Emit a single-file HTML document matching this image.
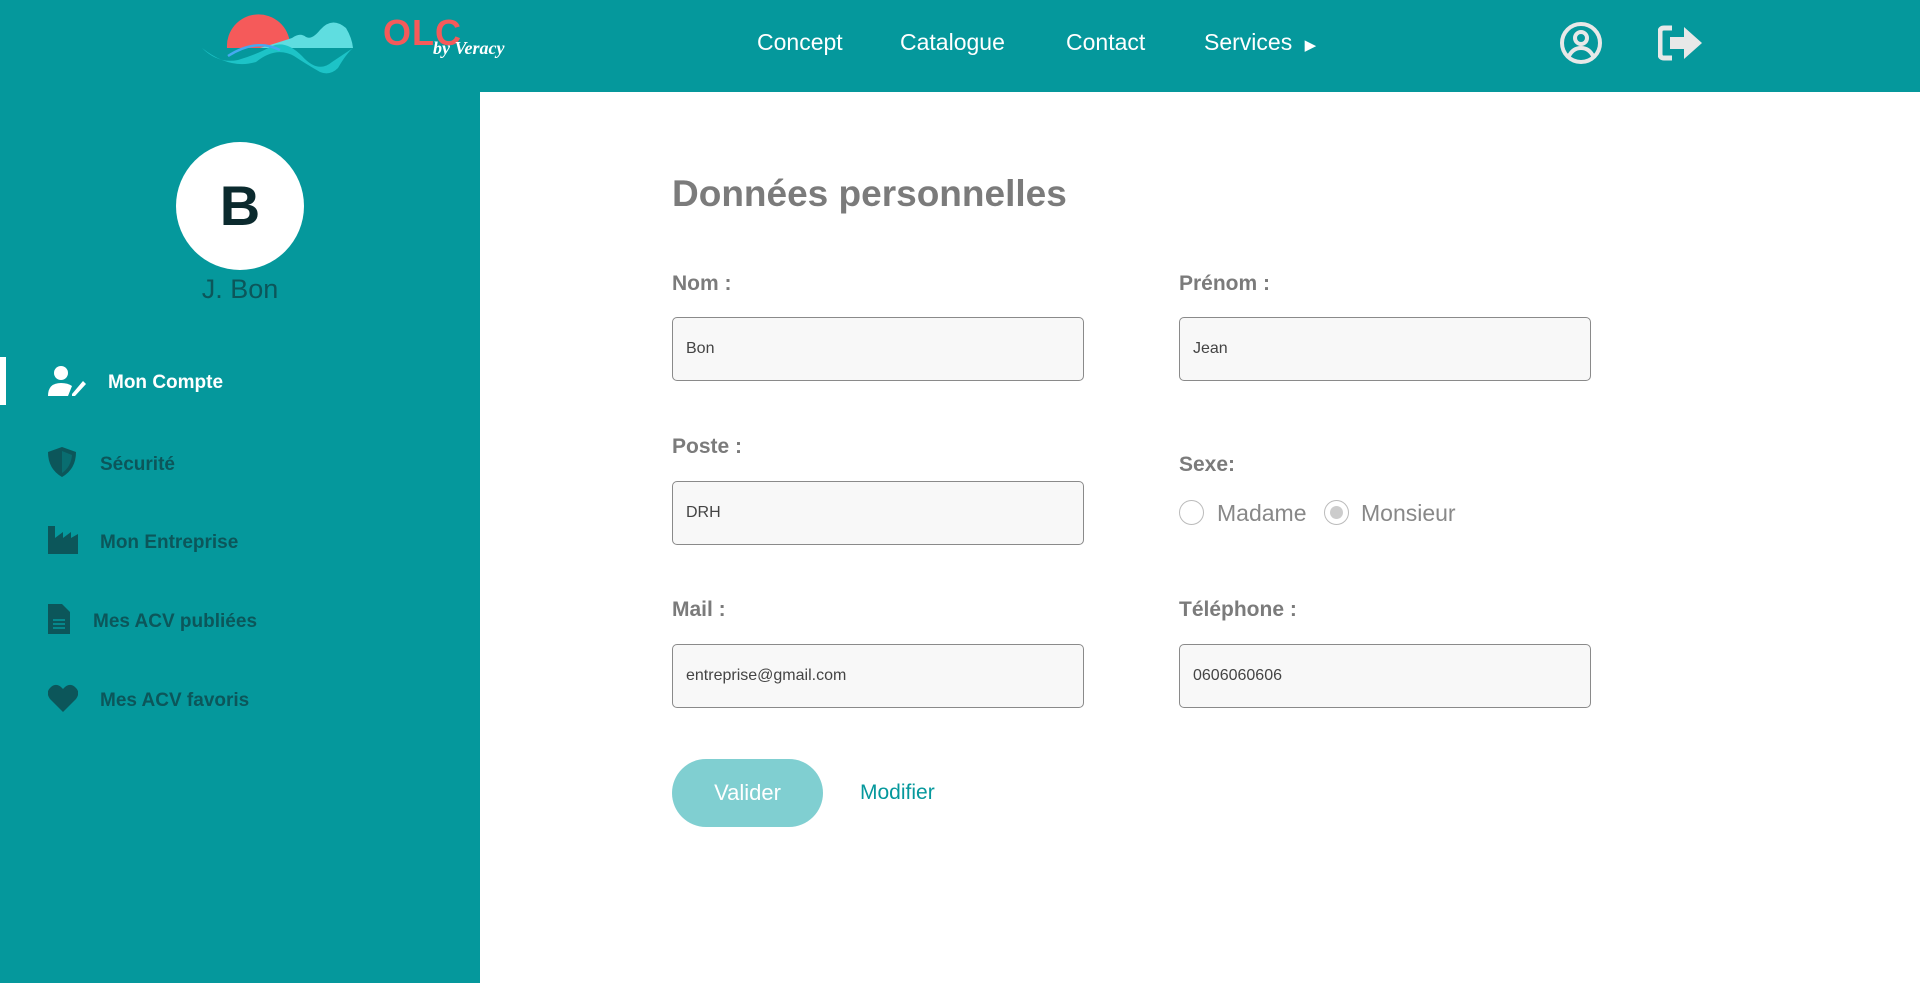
<!DOCTYPE html>
<html><head><meta charset="utf-8"><style>
*{margin:0;padding:0;box-sizing:border-box}
body{width:1920px;height:983px;overflow:hidden;font-family:"Liberation Sans",Arial,sans-serif;background:#fff;position:relative}
.hdr{position:absolute;left:0;top:0;width:1920px;height:92px;background:#05989c}
.side{position:absolute;left:0;top:92px;width:480px;height:891px;background:#05989c}
.nav{position:absolute;top:29px;color:#fff;font-size:23px}
.abs{position:absolute}
.mi{position:absolute;font-weight:bold;font-size:19px;color:#0c565a}
.lbl{position:absolute;font-weight:bold;font-size:21px;color:#7b7b7b}
.inp{position:absolute;width:412px;height:64px;border:1px solid #8a8a8a;border-radius:5px;background:#f8f8f8;font-size:16px;color:#444;padding:22px 0 0 13px}
</style></head><body>
<div class="hdr">
<svg class="abs" style="left:200px;top:4px" width="160" height="72" viewBox="0 0 160 72">
<path d="M27 44 A31 31 0 1 1 90 40 L90 44Z" fill="#f55a5a"/>
<path d="M60 44 Q80 38 92 34 Q100 28 106 33 Q112 36 120 26 Q132 12 146 24 Q152 34 153 44Z" fill="#5fdde0"/>
<path d="M2 44 Q18 60 38 56 Q58 50 72 42 Q86 36 102 52 Q118 70 132 58 L153 44 Q146 50 138 64 Q130 72 120 68 Q106 60 94 52 Q76 42 56 58 Q30 66 2 44Z" fill="#1dc3c7"/>
<path d="M28 52 Q56 34 80 46" stroke="#46a9f0" stroke-width="2.5" fill="none"/>
</svg>
<div class="abs" style="left:383px;top:12px;color:#f55a5a;font-weight:900;font-size:36px;letter-spacing:1px">OLC</div>
<div class="abs" style="left:433px;top:38px;color:#fff;font-style:italic;font-weight:bold;font-size:18px;font-family:'Liberation Serif',serif">by Veracy</div>
<div class="nav" style="left:757px">Concept</div>
<div class="nav" style="left:900px">Catalogue</div>
<div class="nav" style="left:1066px">Contact</div>
<div class="nav" style="left:1204px">Services <span style="font-size:15px;margin-left:6px">&#9654;</span></div>
<svg class="abs" style="left:1559px;top:21px" width="44" height="44" viewBox="0 0 44 44" fill="none" stroke="#e8e8e8" stroke-width="4"><circle cx="22" cy="22" r="19"/><circle cx="22" cy="17" r="6"/><path d="M10 35 Q14 27 22 27 Q30 27 34 35"/></svg>
<svg class="abs" style="left:1658px;top:24px" width="46" height="38" viewBox="0 0 46 38"><path d="M14 4 H6 Q2 4 2 8 V30 Q2 34 6 34 H14" stroke="#e8e8e8" stroke-width="5" fill="none"/><path d="M12 13 H26 V3 L44 19 L26 35 V25 H12Z" fill="#e8e8e8"/></svg>
</div>
<div class="side">
<div class="abs" style="left:176px;top:50px;width:128px;height:128px;border-radius:50%;background:#fff;text-align:center;line-height:128px;font-size:56px;font-weight:bold;color:#0b2a2e">B</div>
<div class="abs" style="left:0;width:480px;top:182px;text-align:center;font-size:27px;color:#0c565a">J. Bon</div>
<div class="abs" style="left:0;top:265px;width:6px;height:48px;background:#fff"></div>
<svg class="abs" style="left:48px;top:274px" width="38" height="30" viewBox="0 0 38 30" fill="#fff"><circle cx="13" cy="7" r="7"/><path d="M0 30 Q0 17 13 17 Q20 17 24 20 L20 30Z"/><path d="M24 28 L35 15 L38 18 L27 30 H24Z"/></svg>
<div class="mi" style="left:108px;top:280px;color:#fff">Mon Compte</div>
<svg class="abs" style="left:48px;top:355px" width="28" height="30" viewBox="0 0 28 30" fill="#0c565a"><path d="M14 0 L28 5 Q28 22 14 30 Q0 22 0 5Z"/><path d="M14 4 L24 8 Q23 20 14 26Z" fill="#05989c" opacity=".35"/></svg>
<div class="mi" style="left:100px;top:362px">Sécurité</div>
<svg class="abs" style="left:48px;top:434px" width="30" height="28" viewBox="0 0 30 28" fill="#0c565a"><path d="M0 0 H7 V12 L15 6 V12 L23 6 V12 L30 8 V28 H0Z"/></svg>
<div class="mi" style="left:100px;top:440px">Mon Entreprise</div>
<svg class="abs" style="left:48px;top:512px" width="22" height="30" viewBox="0 0 22 30" fill="#0c565a"><path d="M0 0 H14 L22 8 V30 H0Z"/><path d="M5 16 H17 M5 20 H17 M5 24 H17" stroke="#05989c" stroke-width="1.6"/></svg>
<div class="mi" style="left:93px;top:519px">Mes ACV publiées</div>
<svg class="abs" style="left:48px;top:592px" width="30" height="28" viewBox="0 0 30 28" fill="#0c565a"><path d="M15 28 L2 15 Q-3 8 3 3 Q9 -2 15 5 Q21 -2 27 3 Q33 8 28 15Z"/></svg>
<div class="mi" style="left:100px;top:598px">Mes ACV favoris</div>
</div>
<div class="abs" style="left:672px;top:173px;font-size:37px;font-weight:bold;color:#7b7b7b">Données personnelles</div>
<div class="lbl" style="left:672px;top:272px">Nom :</div>
<div class="lbl" style="left:1179px;top:272px">Prénom :</div>
<div class="inp" style="left:672px;top:317px">Bon</div>
<div class="inp" style="left:1179px;top:317px">Jean</div>
<div class="lbl" style="left:672px;top:435px">Poste :</div>
<div class="inp" style="left:672px;top:481px">DRH</div>
<div class="lbl" style="left:1179px;top:453px">Sexe:</div>
<div class="abs" style="left:1179px;top:500px;width:25px;height:25px;border:1px solid #bbb;border-radius:50%;background:#fff"></div>
<div class="abs" style="left:1217px;top:500px;font-size:23px;color:#888">Madame</div>
<div class="abs" style="left:1324px;top:500px;width:25px;height:25px;border:1px solid #bbb;border-radius:50%;background:#fff"><div style="margin:5px;width:13px;height:13px;border-radius:50%;background:#ccc"></div></div>
<div class="abs" style="left:1361px;top:500px;font-size:23px;color:#888">Monsieur</div>
<div class="lbl" style="left:672px;top:598px">Mail :</div>
<div class="lbl" style="left:1179px;top:598px">Téléphone :</div>
<div class="inp" style="left:672px;top:644px">entreprise@gmail.com</div>
<div class="inp" style="left:1179px;top:644px">0606060606</div>
<div class="abs" style="left:672px;top:759px;width:151px;height:68px;border-radius:34px;background:#80cfd1;color:#fff;font-size:22px;text-align:center;line-height:68px">Valider</div>
<div class="abs" style="left:860px;top:781px;font-size:21px;color:#05989c">Modifier</div>
</body></html>
